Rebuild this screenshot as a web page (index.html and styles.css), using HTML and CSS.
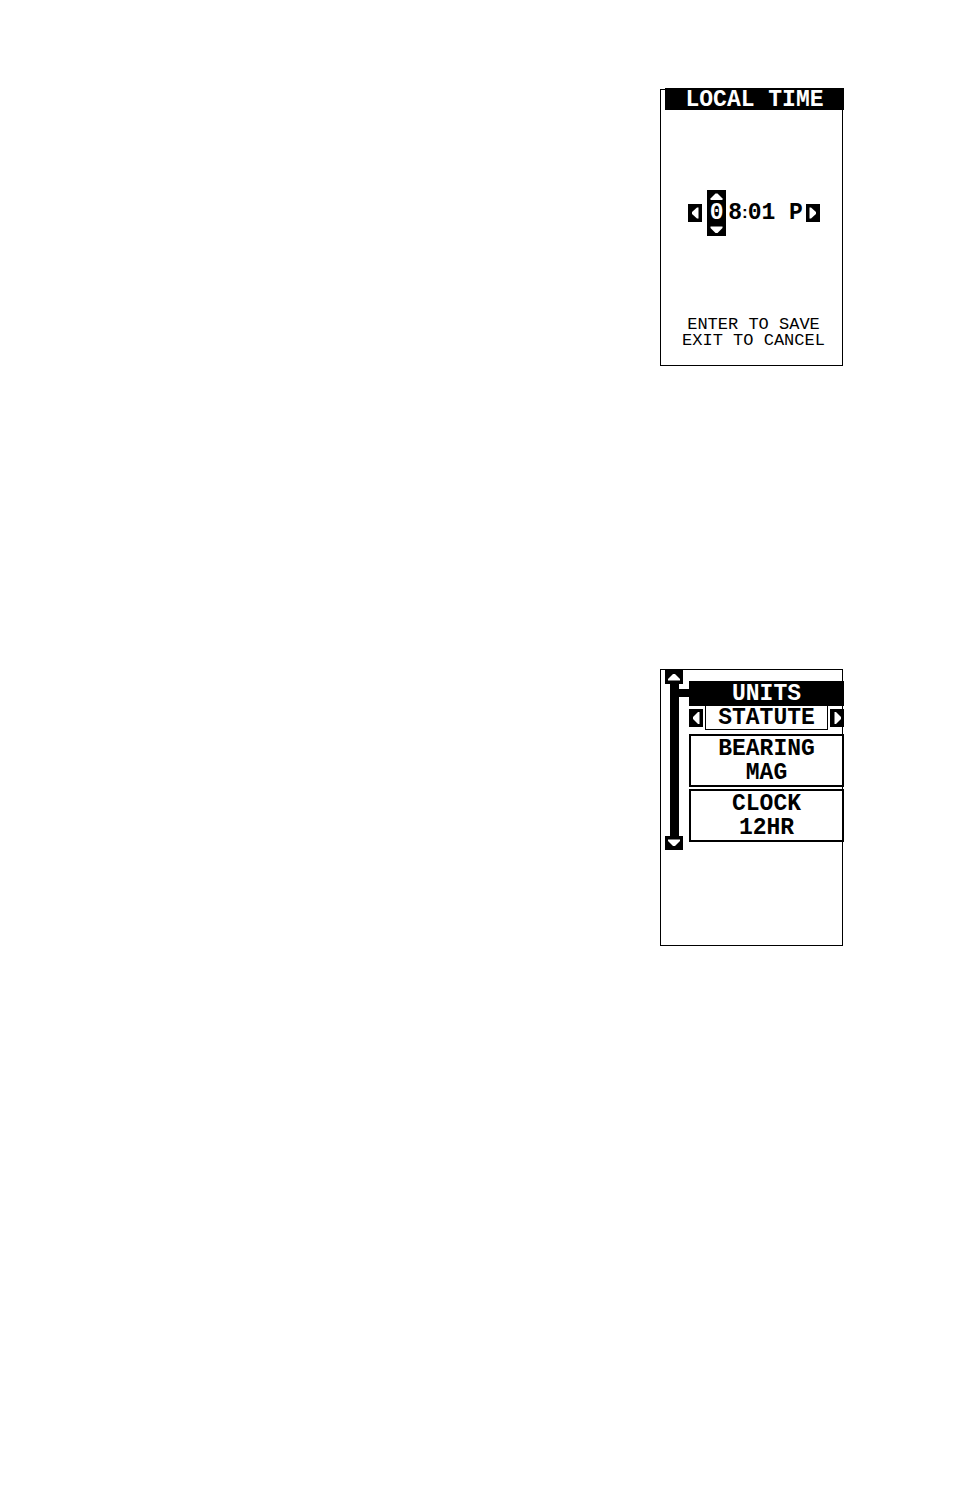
FILE: index.html
```
<!DOCTYPE html>
<html lang="en">
<head>
  <meta charset="UTF-8" />
  <meta name="viewport" content="width=device-width, initial-scale=1.0"/>
  <title>Local Time and Units</title>
  <link rel="stylesheet" href="styles.css">
</head>
<body>

<main class="page">

  <section class="screen">
    <h2 class="title-bar">LOCAL TIME</h2>

    <div class="time-row">
      <button class="arrow" aria-label="Previous digit">
        <svg width="14" height="18" viewBox="0 0 14 18"><path d="M10.5 3.5v11H9L4 10V8l5-4.500z"/></svg>
      </button>
      <div class="digit">
        <button class="step" aria-label="Increase">
          <svg width="19" height="12" viewBox="0 0 19 12"><path d="M8.500 3.500h2L15.500 8.500V10H3.500V8.500z"/></svg>
        </button>
        <span>0</span>
        <button class="step" aria-label="Decrease">
          <svg width="19" height="12" viewBox="0 0 19 12"><path d="M3.500 2.500h12V4L10.500 9h-2L3.500 4z"/></svg>
        </button>
      </div>
      <div class="time"><span>8</span><span class="colon">:</span><span>01 P</span></div>
      <button class="arrow" aria-label="Next digit">
        <svg width="14" height="18" viewBox="0 0 14 18"><path d="M3.500 3.500v11H5L10 10V8L5 3.500z"/></svg>
      </button>
    </div>

    <p class="hint">ENTER TO SAVE<br>EXIT TO CANCEL</p>
  </section>

  <section class="screen menu">
    <div class="rail">
      <button class="arrow" aria-label="Scroll up">
        <svg width="18" height="14" viewBox="0 0 18 14"><path d="M8 4h2l5 5v1.500H3V9z"/></svg>
      </button>
      <div class="track"></div>
      <button class="arrow" aria-label="Scroll down">
        <svg width="18" height="14" viewBox="0 0 18 14"><path d="M3 3.500h12V5l-5 5H8L3 5z"/></svg>
      </button>
    </div>
    <div class="link"></div>
    <div class="items">
      <h2 class="item-title">UNITS</h2>
      <div class="picker">
        <button class="arrow" aria-label="Previous unit">
          <svg width="14" height="18" viewBox="0 0 14 18"><path d="M10.500 3v12H9L4 10V8l5-5z"/></svg>
        </button>
        <output class="value">STATUTE</output>
        <button class="arrow" aria-label="Next unit">
          <svg width="14" height="18" viewBox="0 0 14 18"><path d="M4.500 3v12H6L11 10V8L6 3z"/></svg>
        </button>
      </div>
      <button class="item">BEARING<br>MAG</button>
      <button class="item">CLOCK<br>12HR</button>
    </div>
  </section>

</main>

</body>
</html>
```
FILE: styles.css
```
* { box-sizing: border-box; }
body {
  margin: 0;
  background: #fff;
  color: #000;
  font: bold 23px/24px "Liberation Mono", monospace;
}
h2, p { margin: 0; font-size: inherit; }
button {
  border: none;
  padding: 0;
  font: inherit;
  color: inherit;
  background: none;
  cursor: pointer;
}
svg { display: block; fill: #fff; }
.page {
  display: flex;
  flex-direction: column;
  align-items: flex-end;
  gap: 303px;
  padding: 89px 111px;
}
.screen {
  width: 183px;
  min-height: 277px;
  border: 1px solid #000;
}
.title-bar {
  margin: -2px -2px 0 4px;
  padding-top: 2px;
  background: #000;
  color: #fff;
  line-height: 20px;
  text-align: center;
}
.arrow { background: #000; }

/* time entry */
.time-row {
  display: flex;
  align-items: center;
  justify-content: center;
  margin-top: 80px;
  padding-left: 5px;
}
.digit {
  display: flex;
  flex-direction: column;
  align-items: center;
  margin: 0 2px 0 5px;
  background: #000;
  color: #fff;
  line-height: 22px;
}
.time {
  display: flex;
  margin-right: 3px;
}
.colon {
  font-family: "Liberation Sans", sans-serif;
  font-size: 17px;
}
.hint {
  margin-top: 81px;
  padding-left: 4px;
  font-size: 17px;
  font-weight: normal;
  line-height: 16px;
  text-align: center;
}

/* units menu */
.menu {
  display: flex;
  align-items: flex-start;
  padding-left: 4px;
}
.rail {
  display: flex;
  flex-direction: column;
  align-items: center;
}
.track {
  width: 9px;
  height: 152px;
  background: #000;
}
.link {
  width: 10px;
  height: 8px;
  margin: 19px 0 0 -4px;
  background: #000;
}
.items {
  display: flex;
  flex: 1;
  flex-direction: column;
  margin: 11px -2px 0 0;
}
.item-title {
  padding-top: 2px;
  background: #000;
  color: #fff;
  line-height: 23px;
  text-align: center;
}
.picker {
  display: flex;
  align-items: center;
  justify-content: space-between;
  margin-bottom: 4px;
}
.value {
  flex: 1;
  margin: 0 2px;
  border: 1px solid #000;
  border-top: none;
  padding-top: 1px;
  line-height: 22px;
  text-align: center;
}
.item {
  margin-bottom: 2px;
  border: 2px solid #000;
  padding: 1px 0 0;
  text-align: center;
}
```
